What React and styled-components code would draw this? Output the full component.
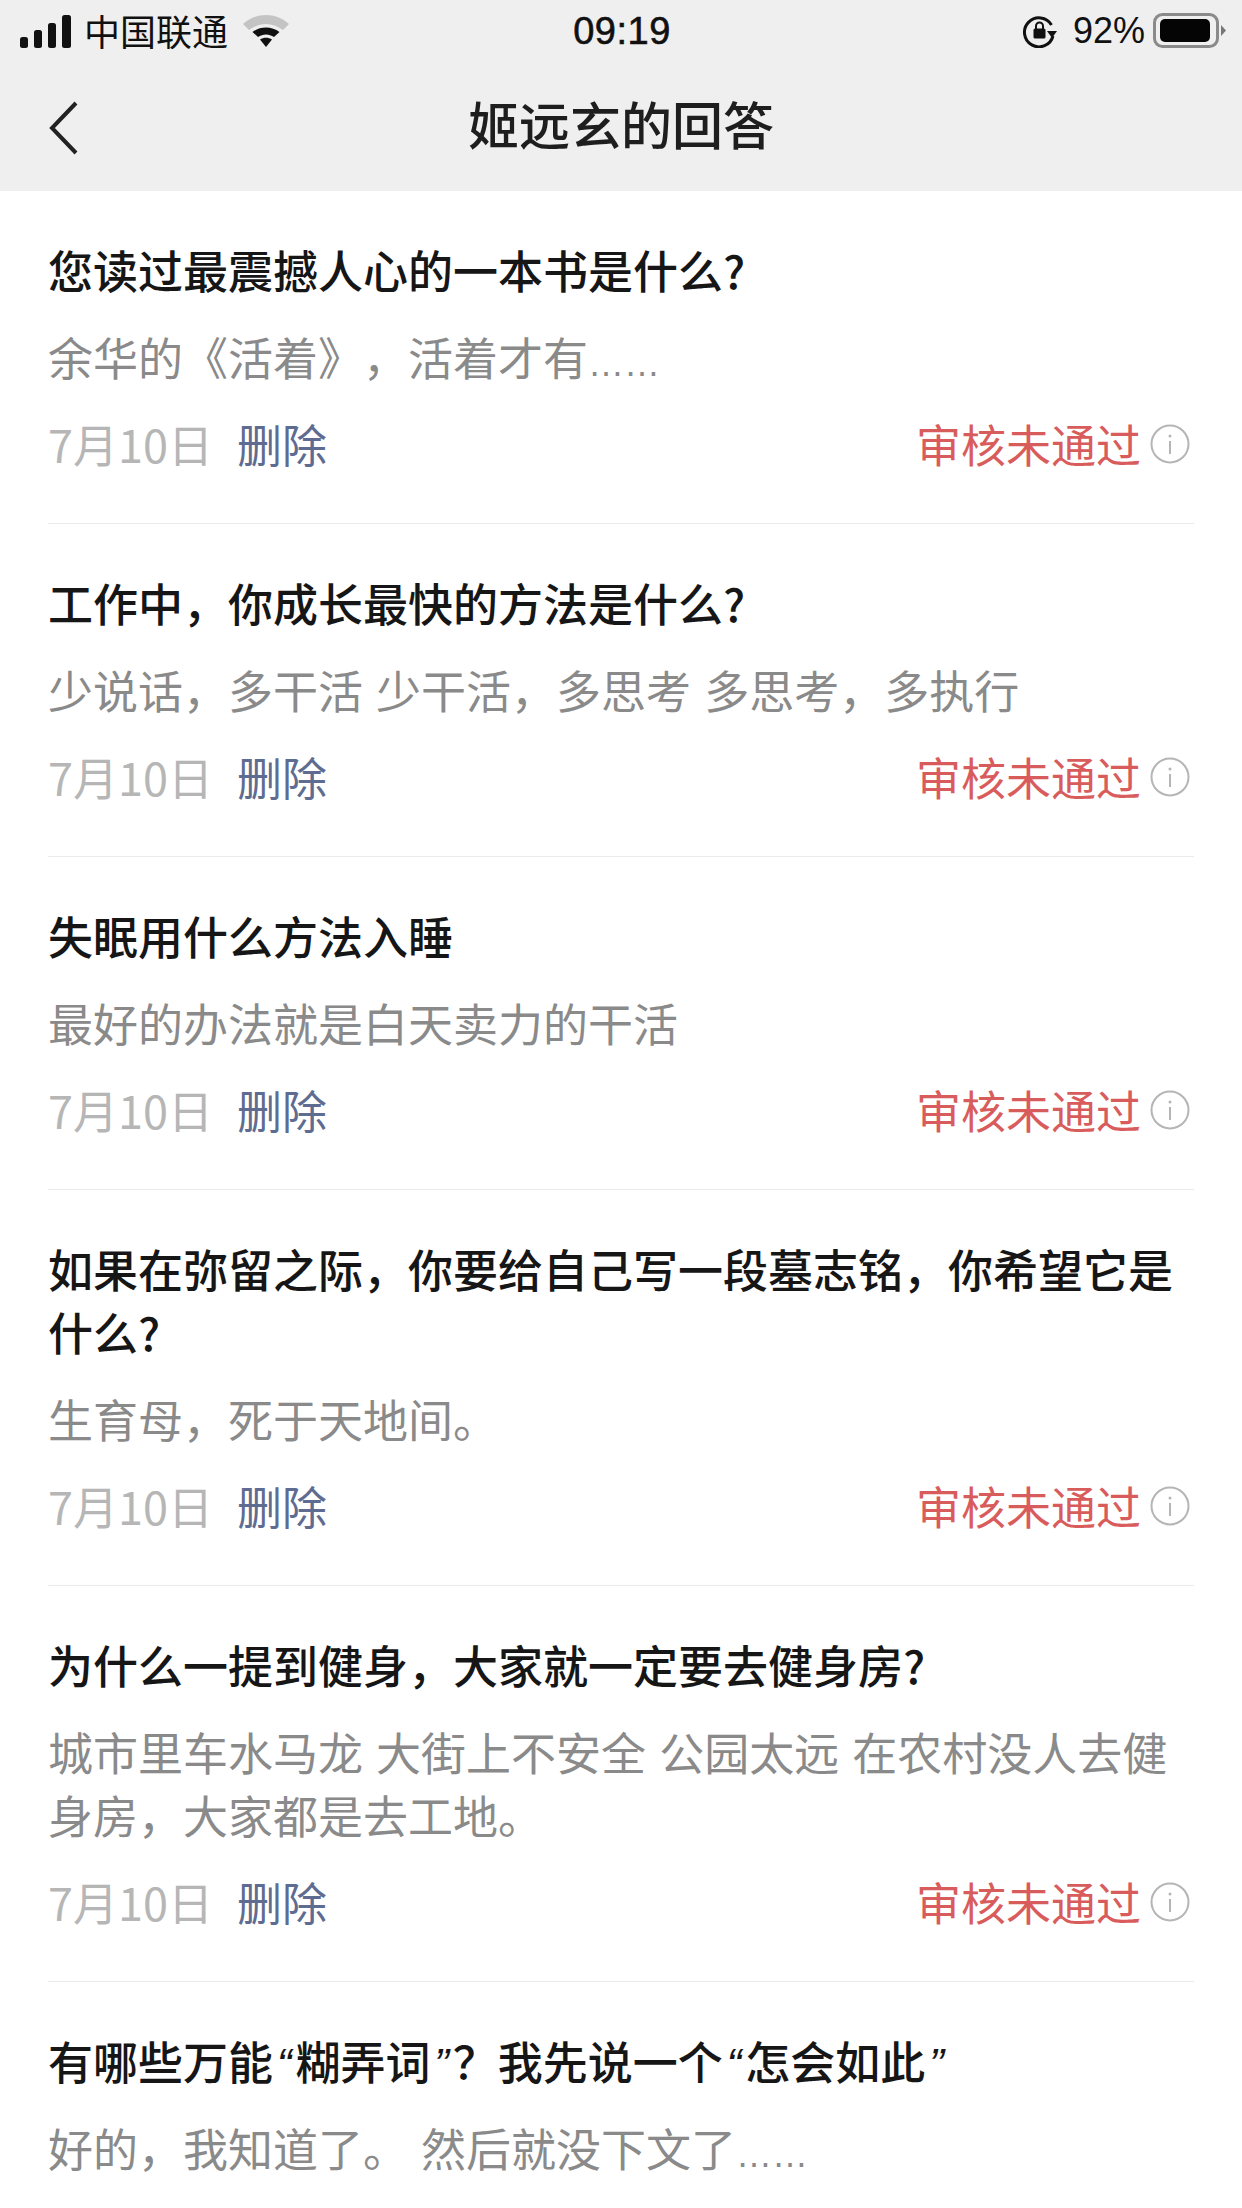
import React from 'react';
import styled, { createGlobalStyle } from 'styled-components';

const GlobalStyle = createGlobalStyle`
  html, body {
    margin: 0;
    padding: 0;
    background: #fff;
  }
  body {
    font-family: "Noto Sans CJK SC", "Liberation Sans", sans-serif;
    text-spacing-trim: space-all;
  }
`;

const Page = styled.div`
  width: 1242px;
  height: 2208px;
  overflow: hidden;
  background: #fff;
`;

const Header = styled.header`
  height: 191px;
  background: #efefef;
  display: flex;
  flex-direction: column;
`;

const StatusBar = styled.div`
  height: 62px;
  padding: 0 15px 0 20px;
  display: grid;
  grid-template-columns: 1fr auto 1fr;
  align-items: center;
  color: #111;
`;

const StatusLeft = styled.div`
  display: flex;
  align-items: center;
`;

const Carrier = styled.span`
  font-size: 36px;
  line-height: 44px;
  margin: -3px 15px 0 12px;
  font-weight: 400;
`;

const Clock = styled.span`
  font-family: "Liberation Sans", sans-serif;
  font-size: 38px;
  font-weight: 400;
  letter-spacing: 0.5px;
  margin-right: 3px;
  -webkit-text-stroke: 0.6px #111;
`;

const StatusRight = styled.div`
  display: flex;
  align-items: center;
  justify-content: flex-end;
`;

const Percent = styled.span`
  font-family: "Liberation Sans", sans-serif;
  font-size: 36px;
  margin: 0 8px 0 16px;
`;

const NavBar = styled.div`
  flex: 1;
  position: relative;
  display: flex;
  align-items: center;
  justify-content: center;
  padding-bottom: 8px;
`;

const BackButton = styled.svg`
  position: absolute;
  left: 48px;
  top: 38px;
`;

const NavTitle = styled.h1`
  margin: 0;
  font-size: 51px;
  line-height: 64px;
  font-weight: 500;
  color: #1e1e1e;
`;

const List = styled.main`
  padding: 0 48px;
`;

const Item = styled.article`
  padding: 47px 0 48px;
  border-bottom: 1px solid #ebebeb;
  display: flex;
  flex-direction: column;
  gap: 24px;
`;

const Question = styled.h2`
  margin: 0;
  font-size: 45px;
  line-height: 63px;
  font-weight: 500;
  color: #161616;
`;

const Quote = styled.span`
  font-family: "Liberation Sans", sans-serif;
  font-weight: 400;
  font-style: italic;
  line-height: 0;
  padding: 0 3.7px;
`;

const Answer = styled.p`
  margin: 0;
  font-size: 45px;
  line-height: 63px;
  font-weight: 400;
  color: #8a8a8a;
  word-spacing: 3px;
`;

const Dots = styled.span`
  font-family: "Liberation Sans", sans-serif;
  font-size: 36px;
  line-height: 0;
`;

const Meta = styled.div`
  height: 63px;
  display: flex;
  align-items: center;
  font-size: 45px;
  font-weight: 400;
`;

const DateText = styled.span`
  color: #b6b6b6;
`;

const DeleteLink = styled.span`
  color: #5f6c92;
  margin-left: 24px;
`;

const Status = styled.div`
  margin-left: auto;
  display: flex;
  align-items: center;
  color: #d95c5c;
  padding-right: 4px;
  gap: 9px;
`;

const items = [
  {
    q: '您读过最震撼人心的一本书是什么?',
    a: <>余华的《活着》，活着才有<Dots>……</Dots></>,
    date: '7月10日',
  },
  { q: '工作中，你成长最快的方法是什么?', a: '少说话，多干活 少干活，多思考 多思考，多执行', date: '7月10日' },
  { q: '失眠用什么方法入睡', a: '最好的办法就是白天卖力的干活', date: '7月10日' },
  { q: '如果在弥留之际，你要给自己写一段墓志铭，你希望它是什么?', a: '生育母，死于天地间。', date: '7月10日' },
  {
    q: '为什么一提到健身，大家就一定要去健身房?',
    a: '城市里车水马龙 大街上不安全 公园太远 在农村没人去健身房，大家都是去工地。',
    date: '7月10日',
  },
  {
    q: <>有哪些万能<Quote>“</Quote>糊弄词<Quote>”</Quote>？我先说一个<Quote>“</Quote>怎会如此<Quote>”</Quote></>,
    a: <>好的，我知道了。 然后就没下文了<Dots>……</Dots></>,
  },
];

function Signal() {
  return (
    <svg width="52" height="33" viewBox="0 0 52 33">
      <rect x="0" y="22" width="8" height="11" rx="2.5" fill="#111" />
      <rect x="14" y="15" width="8" height="18" rx="2.5" fill="#111" />
      <rect x="28" y="8" width="8" height="25" rx="2.5" fill="#111" />
      <rect x="42" y="0" width="9" height="33" rx="2.5" fill="#111" />
    </svg>
  );
}

function Wifi() {
  return (
    <svg width="46" height="34" viewBox="0 0 46 34">
      <path d="M0 10 C13 -2 33 -2 46 10 L40 16 C29 8 17 8 6 16 Z" fill="#c4c4c4" />
      <path d="M9.5 18 C17 12 29 12 36.5 18 L31 23 C26 19.5 20 19.5 15 23 Z" fill="#111" />
      <path d="M17 25.5 C20.5 23 25.5 23 29 25.5 L23 33 Z" fill="#111" />
    </svg>
  );
}

function RotationLock() {
  return (
    <svg width="34" height="34" viewBox="0 0 34 34">
      <path d="M28.5 11 A14.5 14.5 0 1 0 30 22" fill="none" stroke="#111" strokeWidth="3" />
      <path d="M24 17 L34 17 L29 24 Z" fill="#111" />
      <rect x="10.5" y="14.5" width="12" height="10" rx="1.5" fill="#111" />
      <path d="M13 15 V12 a3.5 3.5 0 0 1 7 0 V15" fill="none" stroke="#111" strokeWidth="2" />
    </svg>
  );
}

function Battery() {
  return (
    <svg width="74" height="36" viewBox="0 0 74 36">
      <rect x="1.5" y="1.5" width="63" height="32" rx="8" fill="none" stroke="#8a8a8a" strokeWidth="3" />
      <rect x="7" y="6" width="50" height="23" rx="5" fill="#050505" />
      <path d="M68 12 L73 17.5 L68 23 Z" fill="#777" />
    </svg>
  );
}

function InfoIcon() {
  return (
    <svg width="40" height="40" viewBox="0 0 40 40">
      <circle cx="20" cy="20" r="18.5" fill="none" stroke="#b5b5b5" strokeWidth="2" />
      <circle cx="20" cy="12" r="1.5" fill="#b5b5b5" />
      <rect x="19" y="17" width="2" height="13" fill="#b5b5b5" />
    </svg>
  );
}

export default function App() {
  return (
    <Page>
      <GlobalStyle />
      <Header>
        <StatusBar>
          <StatusLeft>
            <Signal />
            <Carrier>中国联通</Carrier>
            <Wifi />
          </StatusLeft>
          <Clock>09:19</Clock>
          <StatusRight>
            <RotationLock />
            <Percent>92%</Percent>
            <Battery />
          </StatusRight>
        </StatusBar>
        <NavBar>
          <BackButton width="32" height="56" viewBox="0 0 32 56">
            <path d="M28 3 L4 28 L28 53" fill="none" stroke="#222" strokeWidth="4" />
          </BackButton>
          <NavTitle>姬远玄的回答</NavTitle>
        </NavBar>
      </Header>
      <List>
        {items.map((item, i) => (
          <Item key={i}>
            <Question>{item.q}</Question>
            <Answer>{item.a}</Answer>
            {item.date && (
              <Meta>
                <DateText>{item.date}</DateText>
                <DeleteLink>删除</DeleteLink>
                <Status>
                  审核未通过
                  <InfoIcon />
                </Status>
              </Meta>
            )}
          </Item>
        ))}
      </List>
    </Page>
  );
}
